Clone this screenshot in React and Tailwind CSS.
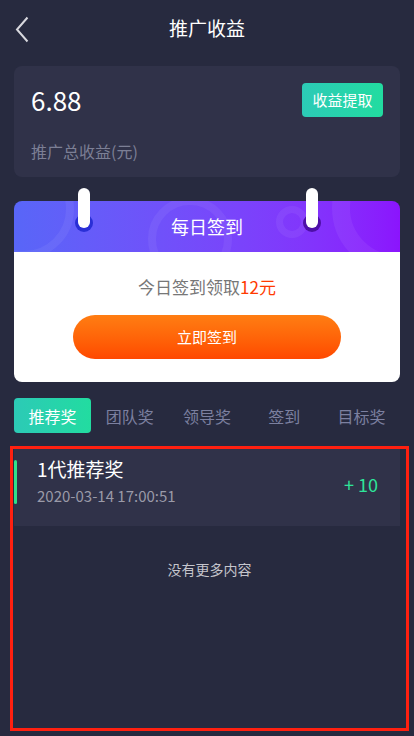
const FONT = { fontFamily: '"Noto Sans CJK SC", "Noto Sans", sans-serif' };

const tabs = ["推荐奖", "团队奖", "领导奖", "签到", "目标奖"];

function Pin({ ring }) {
  return (
    <div className="relative w-[18px] h-[44px]">
      <div className={`absolute left-0 bottom-0 w-[18px] h-[18px] rounded-full ${ring}`} />
      <div className="absolute left-[3px] top-0 w-[12px] h-[40px] rounded-full bg-white" />
    </div>
  );
}

export default function App() {
  return (
    <div className="w-[414px] h-[736px] bg-[#272a3f] overflow-hidden" style={FONT}>
      <div className="relative h-[56px] flex items-center justify-center">
        <svg className="absolute left-[15px] top-[16px]" width="14" height="27" viewBox="0 0 14 27" fill="none">
          <polyline points="12.5,1.5 2,13.5 12.5,25.5" stroke="#d8d8de" strokeWidth="2" />
        </svg>
        <span className="text-[19px] text-white">推广收益</span>
      </div>

      <div className="mx-[14px] mt-[10px] h-[111px] rounded-lg bg-[#303249] px-[17px] pt-[17px]">
        <div className="flex items-center justify-between">
          <span className="text-[26px] text-white leading-none">6.88</span>
          <button className="w-[81px] h-[34px] rounded-[4px] bg-gradient-to-r from-[#2ccab6] to-[#22dca0] text-white text-[15px]">
            收益提取
          </button>
        </div>
        <div className="mt-[22px] text-[16px] text-[#7c7f95]">推广总收益(元)</div>
      </div>

      <div className="relative mx-[14px] mt-[24px]">
        <div className="rounded-lg overflow-hidden">
          <div className="relative h-[51px] bg-gradient-to-r from-[#5866f8] to-[#8b14fd] flex items-center justify-center overflow-hidden">
            <div className="absolute left-[-40px] top-[-42px] w-[100px] h-[100px] rounded-full border-[8px] border-white/[0.06]" />
            <div className="absolute left-[134px] top-[-4px] w-[84px] h-[84px] rounded-full border-[8px] border-white/[0.06]" />
            <div className="absolute left-[262px] top-[5px] w-[32px] h-[32px] rounded-full border-[7px] border-white/[0.06]" />
            <div className="absolute left-[318px] top-[-58px] w-[130px] h-[130px] rounded-full border-[18px] border-white/[0.06]" />
            <span className="relative text-[18px] text-white">每日签到</span>
          </div>
          <div className="h-[130px] bg-white pt-[23px] flex flex-col items-center">
            <div className="text-[17px] leading-[24px] text-[#777]">
              今日签到领取<span className="text-[#ff3a00]">12元</span>
            </div>
            <button className="mt-[16px] w-[268px] h-[44px] rounded-full bg-gradient-to-b from-[#ff7d12] to-[#ff4800] text-white text-[15px]">
              立即签到
            </button>
          </div>
        </div>
        <div className="absolute left-[61px] top-[-13px]">
          <Pin ring="bg-[#2a2fd6]" />
        </div>
        <div className="absolute left-[289px] top-[-13px]">
          <Pin ring="bg-[#4d0fa8]" />
        </div>
      </div>

      <div className="mx-[14px] mt-[16px] grid grid-cols-5 h-[35px]">
        {tabs.map((t, i) => (
          <div
            key={t}
            className={`flex items-center justify-center text-[16px] rounded-[4px] ${
              i === 0 ? "bg-gradient-to-r from-[#2ccab6] to-[#22dca0] text-white" : "text-[#7c80a0]"
            }`}
          >
            {t}
          </div>
        ))}
      </div>

      <div className="ml-[10px] mt-[13px] w-[399px] h-[285px] border-[3px] border-[#ff2010]">
        <div className="ml-[1px] w-[386px] h-[77px] bg-[#303249] flex items-start pr-[22px]">
          <div className="w-[3px] h-[44px] rounded-full bg-[#2ee08a] mt-[11px]" />
          <div className="ml-[20px] flex-1 pt-[8px]">
            <div className="text-[19px] leading-[24px] text-white">1代推荐奖</div>
            <div className="mt-[5px] text-[15px] leading-[20px] text-[#9a9aa8]">2020-03-14 17:00:51</div>
          </div>
          <span className="self-center mt-[-6px] text-[18px] text-[#2ee59a]">+ 10</span>
        </div>
        <div className="mt-[33px] text-center text-[14px] leading-[20px] text-[#c5c5cc]">没有更多内容</div>
      </div>
    </div>
  );
}
